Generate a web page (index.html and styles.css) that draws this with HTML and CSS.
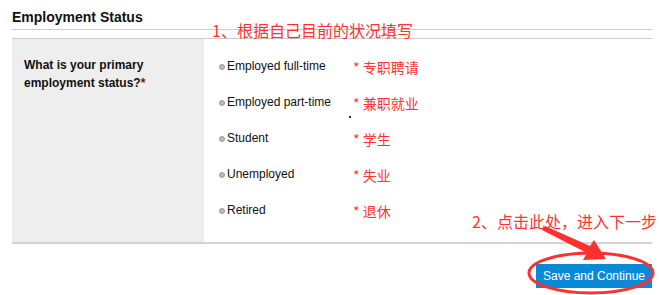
FILE: index.html
```html
<!DOCTYPE html>
<html lang="zh-CN">
<head>
    <meta charset="UTF-8">
    <title>Employment Status</title>
    <link rel="stylesheet" href="styles.css">
</head>
<body>
    <div class="page">
        <h2 class="section-title">Employment Status</h2>
        <div class="title-rule"></div>

        <!-- 说明 1 -->
        <div class="note note-one">1、根据自己目前的状况填写</div>

        <div class="question-row">
            <div class="question-label">What is your primary employment status?<span class="req">*</span></div>
            <div class="question-options">
                <div class="option"><span class="dot"></span><span class="option-text">Employed full-time</span><span class="hint">* 专职聘请</span></div>
                <div class="option"><span class="dot"></span><span class="option-text">Employed part-time</span><span class="hint">* 兼职就业</span></div>
                <div class="option"><span class="dot"></span><span class="option-text">Student</span><span class="hint">* 学生</span></div>
                <div class="option"><span class="dot"></span><span class="option-text">Unemployed</span><span class="hint">* 失业</span></div>
                <div class="option"><span class="dot"></span><span class="option-text">Retired</span><span class="hint">* 退休</span></div>
                <span class="stray"></span>
            </div>
        </div>

        <div class="actions">
            <button class="save-button">Save and Continue</button>
        </div>

        <!-- 说明 2 -->
        <div class="note note-two">2、点击此处，进入下一步</div>
        <svg class="mark" width="659" height="295" viewBox="0 0 659 295">
            <ellipse cx="591" cy="273" rx="62" ry="20" fill="none" stroke="#ff3030" stroke-width="3"/>
            <polygon points="542,230 545,226 590,246 594,240 606,259 583,260 587,253" fill="#ff3030"/>
        </svg>
    </div>
</body>
</html>
```
FILE: styles.css
```css
* {
    margin: 0;
    padding: 0;
    box-sizing: border-box;
}

body {
    font-family: "Liberation Sans", Arial, sans-serif;
    background-color: #fff;
    color: #111;
}

.page {
    position: relative;
    width: 659px;
    height: 295px;
    padding: 0 7px 0 12px;
    overflow: hidden;
}

.section-title {
    font-size: 14px;
    font-weight: bold;
    line-height: 16px;
    padding-top: 9px;
    height: 30px;
    border-bottom: 1px solid #cbcbcb;
}

.title-rule {
    height: 8px;
}

/* 注释文字 */
.note {
    position: absolute;
    font-family: "Noto Sans CJK SC", sans-serif;
    font-size: 16px;
    line-height: 18px;
    color: #ff3333;
    white-space: nowrap;
}

.note-one {
    left: 212px;
    top: 21px;
}

.note-two {
    left: 472px;
    top: 212px;
}

.question-row {
    display: flex;
    border-top: 1px solid #cbcbcb;
    border-bottom: 2px solid #d4d4d4;
    height: 206px;
}

.question-label {
    width: 192px;
    background-color: #eeeeee;
    padding: 17px 20px 0 12px;
    font-size: 12px;
    font-weight: bold;
    line-height: 18px;
}

.req {
    color: #7a1010;
}

.question-options {
    position: relative;
    flex: 1;
    padding: 9px 0 0 15px;
}

.option {
    display: flex;
    align-items: center;
    height: 36px;
    font-size: 12px;
}

.dot {
    width: 6px;
    height: 6px;
    border-radius: 50%;
    background-color: #bbb;
    border: 1px solid #999;
    margin-right: 2px;
    margin-top: 1px;
}

.option-text {
    width: 126px;
    margin-top: -1px;
}

.hint {
    font-family: "Noto Sans CJK SC", sans-serif;
    font-size: 14px;
    color: #ff3333;
    margin-top: 2px;
}

.stray {
    position: absolute;
    left: 145px;
    top: 77px;
    width: 2px;
    height: 2px;
    background-color: #333;
}

.actions {
    display: flex;
    justify-content: flex-end;
    padding-top: 20px;
}

.save-button {
    width: 116px;
    height: 24px;
    border: none;
    background-color: #0a8ad6;
    color: #fff;
    font-family: "Liberation Sans", Arial, sans-serif;
    font-size: 12px;
}

.mark {
    position: absolute;
    left: 0;
    top: 0;
    pointer-events: none;
}
```
